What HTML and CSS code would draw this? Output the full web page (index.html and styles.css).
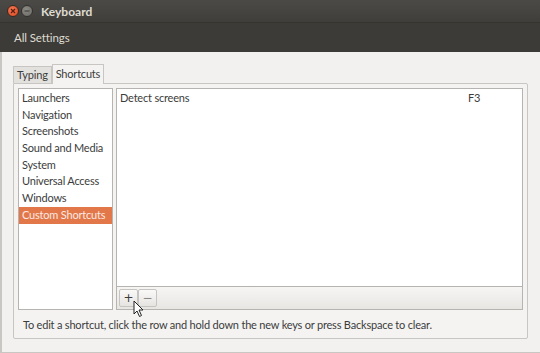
FILE: index.html
```html
<!DOCTYPE html>
<html lang="en">
<head>
    <meta charset="UTF-8">
    <title>Keyboard</title>
    <link rel="stylesheet" href="styles.css">
</head>
<body>
<div class="window">
    <div class="titlebar">
        <span class="wbtn close">
            <svg width="8" height="8" viewBox="0 0 8 8"><path d="M2 2 L6 6 M6 2 L2 6" stroke="#5a1e10" stroke-width="1.3"/></svg>
        </span>
        <span class="wbtn minimize">
            <svg width="8" height="8" viewBox="0 0 8 8"><path d="M1.5 4 H6.5" stroke="#4a4945" stroke-width="1.3"/></svg>
        </span>
        <span class="title">Keyboard</span>
    </div>
    <div class="toolbar">
        <span class="all-settings">All Settings</span>
    </div>

    <div class="content">
        <div class="tabs">
            <div class="tab">Typing</div>
            <div class="tab active">Shortcuts</div>
        </div>
        <div class="notebook">
            <div class="panes">
                <ul class="sections">
                    <li>Launchers</li>
                    <li>Navigation</li>
                    <li>Screenshots</li>
                    <li>Sound and Media</li>
                    <li>System</li>
                    <li>Universal Access</li>
                    <li>Windows</li>
                    <li class="selected">Custom Shortcuts</li>
                </ul>
                <div class="shortcuts">
                    <div class="shortcut-list">
                        <div class="shortcut">
                            <span class="name">Detect screens</span>
                            <span class="accel">F3</span>
                        </div>
                    </div>
                    <div class="list-toolbar">
                        <button class="tool-btn">+</button>
                        <button class="tool-btn">&minus;</button>
                    </div>
                </div>
            </div>
            <p class="hint">To edit a shortcut, click the row and hold down the new keys or press Backspace to clear.</p>
        </div>
    </div>
</div>

<!-- mouse pointer hovering the add button -->
<svg class="pointer" width="12" height="18" viewBox="0 0 12 18">
    <path d="M1 1 L1 14 L4 11 L6.5 16.5 L8.5 15.5 L6 10 L10 10 Z" fill="#fff" stroke="#222" stroke-width="1" stroke-linejoin="round"/>
</svg>
</body>
</html>
```

FILE: styles.css
```css
/* Ubuntu style Keyboard settings window */
body {
    margin: 0;
    width: 540px;
    height: 353px;
    overflow: hidden;
    background-color: #f2f1f0;
    font-family: Lato, "Noto Sans", sans-serif;
    font-size: 11px;
    letter-spacing: -0.2px;
    color: #3c3c3c;
    position: relative;
}

.window {
    display: flex;
    flex-direction: column;
    height: 353px;
    box-sizing: border-box;
    border-left: 2px solid #c9c7c3;
    border-bottom: 1px solid #c9c7c3;
}

.titlebar {
    height: 22px;
    display: flex;
    align-items: center;
    padding-left: 7px;
    background: linear-gradient(#4b4a46, #3f3e3a);
    border-bottom: 1px solid #35342f;
    margin-left: -2px;
}

.wbtn {
    width: 10px;
    height: 10px;
    border-radius: 50%;
    display: flex;
    align-items: center;
    justify-content: center;
    margin-right: 2px;
}

.close {
    background: radial-gradient(circle at 40% 35%, #f47a55, #d9461e);
    border: 1px solid #3a2a22;
}

.minimize {
    background: radial-gradient(circle at 40% 35%, #8c8a85, #6b6964);
    border: 1px solid #33322e;
}

.title {
    margin-left: 6px;
    color: #dfdbd2;
    font-weight: bold;
    font-size: 12px;
    letter-spacing: 0;
}

.toolbar {
    height: 29px;
    display: flex;
    align-items: center;
    padding-left: 14px;
    background: #3c3b37;
    margin-left: -2px;
}

.all-settings {
    color: #dfdbd2;
    font-size: 11.5px;
    letter-spacing: -0.1px;
}

.content {
    padding: 12px 12px 13px 11px;
    flex: 1;
    display: flex;
    flex-direction: column;
}

.tabs {
    display: flex;
    align-items: flex-end;
    height: 19px;
    position: relative;
    z-index: 1;
}

.tab {
    padding: 0 3px;
    height: 16px;
    line-height: 16px;
    background: #e3e1dd;
    border: 1px solid #c8c6c2;
    border-bottom: none;
}

.tab.active {
    height: 19px;
    line-height: 18px;
    background: #f4f3f2;
    margin-bottom: -1px;
}

.notebook {
    flex: 1;
    border: 1px solid #c8c6c2;
    border-radius: 0 2px 2px 2px;
    background: #f4f3f2;
    padding: 4px 4px 0 4px;
    display: flex;
    flex-direction: column;
}

.panes {
    display: flex;
    gap: 3px;
    height: 222px;
}

.sections {
    list-style: none;
    margin: 0;
    padding: 1px 0 0 0;
    width: 93px;
    background: #fff;
    border: 1px solid #b6b4b0;
}

.sections li {
    height: 16.7px;
    line-height: 16.7px;
    padding-left: 3px;
    white-space: nowrap;
}

.sections li.selected {
    background: #e2774a;
    color: #fbe9e0;
}

.shortcuts {
    flex: 1;
    display: flex;
    flex-direction: column;
    border: 1px solid #b6b4b0;
}

.shortcut-list {
    flex: 1;
    background: #fff;
    border-bottom: 1px solid #b6b4b0;
}

.shortcut {
    display: flex;
    height: 18px;
    line-height: 18px;
    padding-left: 3px;
}

.shortcut .name {
    width: 348px;
}

.list-toolbar {
    height: 22px;
    display: flex;
    align-items: center;
    padding-left: 2px;
    background: linear-gradient(#f6f5f4, #e8e6e3);
}

.tool-btn {
    width: 19px;
    height: 18px;
    padding: 0;
    margin: 0;
    border: 1px solid #c6c4c0;
    border-radius: 2px;
    background: linear-gradient(#faf9f8, #e6e4e1);
    font-family: "DejaVu Sans", sans-serif;
    font-size: 12px;
    line-height: 14px;
    color: #3c3c3c;
}

.tool-btn + .tool-btn {
    color: #8a8884;
}

.hint {
    margin: 0;
    padding: 8px 0 0 5px;
    white-space: nowrap;
}

.pointer {
    position: absolute;
    left: 133px;
    top: 300px;
}
```
